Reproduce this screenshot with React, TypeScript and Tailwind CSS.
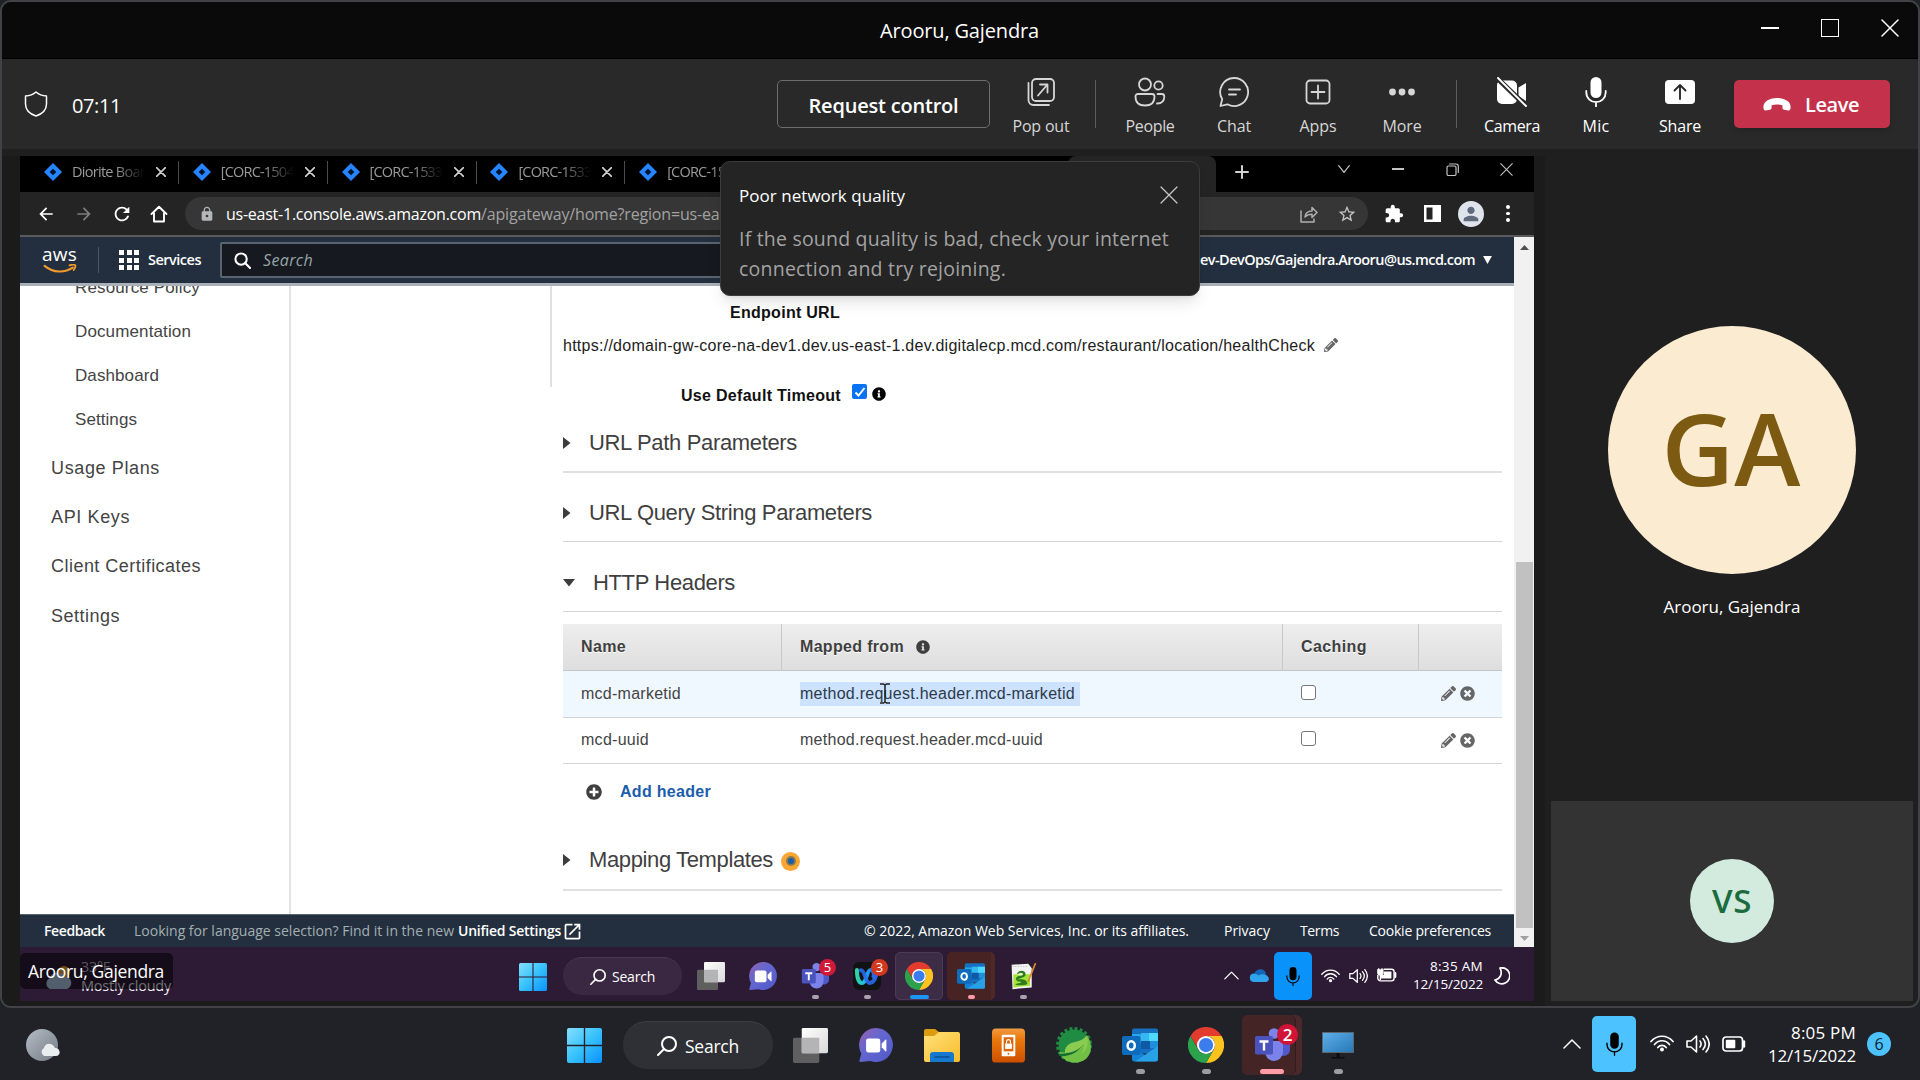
import React, { useLayoutEffect, useRef, useState } from "react";
import { FaPencilAlt, FaInfoCircle, FaTimesCircle, FaPlusCircle } from "react-icons/fa";
import { MdLock, MdStarBorder, MdExtension, MdPerson, MdOpenInNew, MdArrowBack, MdArrowForward, MdRefresh } from "react-icons/md";

/* Single line of text whose letter spacing is tuned so it fills its box. */
function T({ c, children }: { c: string; children: string }) {
  const box = useRef<HTMLSpanElement>(null);
  const inner = useRef<HTMLSpanElement>(null);
  const [ls, setLs] = useState(0);
  useLayoutEffect(() => {
    if (!box.current || !inner.current) return;
    const free = box.current.clientWidth - inner.current.getBoundingClientRect().width;
    setLs(free / children.length);
  }, [children]);
  return (
    <span ref={box} className={"block shrink-0 whitespace-nowrap " + c}>
      <span ref={inner} style={{ letterSpacing: ls + "px" }}>{children}</span>
    </span>
  );
}

const stroke = { fill: "none", stroke: "currentColor", strokeLinecap: "round", strokeLinejoin: "round" } as const;

/* ---------- icons ---------- */
const WinLogo = ({ c }: { c: string }) => (
  <svg viewBox="0 0 36 36" className={c}>
    <defs>
      <linearGradient id="win" x1="0" y1="0" x2="1" y2="1">
        <stop offset="0" stopColor="#86dfff" /><stop offset="0.5" stopColor="#37c2fb" /><stop offset="1" stopColor="#0a90ff" />
      </linearGradient>
    </defs>
    <path fill="url(#win)" d="M2 0h15.3v17.3H0V2a2 2 0 0 1 2-2zM18.7 0H34a2 2 0 0 1 2 2v15.3H18.7zM0 18.7h17.3V36H2a2 2 0 0 1-2-2zM18.7 18.7H36V34a2 2 0 0 1-2 2H18.7z" />
  </svg>
);
const Magnifier = ({ c }: { c: string }) => (
  <svg viewBox="0 0 20 20" className={c} {...stroke} strokeWidth="2">
    <circle cx="12" cy="8" r="7" /><path d="M7 13L1 19" />
  </svg>
);
const TaskView = ({ c }: { c: string }) => (
  <svg viewBox="0 0 36 36" className={c}>
    <defs><linearGradient id="tv" x1="0" y1="0" x2="1" y2="1"><stop offset="0" stopColor="#fff" /><stop offset="1" stopColor="#d9d9d9" /></linearGradient></defs>
    <rect x="0" y="10" width="27" height="26" rx="1.5" fill="#5f5f60" />
    <rect x="9" y="0" width="27" height="26" rx="1.5" fill="url(#tv)" />
    <rect x="9" y="10" width="18" height="16" fill="#b4b4b6" />
  </svg>
);
const ChatApp = ({ c }: { c: string }) => (
  <svg viewBox="0 0 36 36" className={c}>
    <defs><linearGradient id="ca" x1="0" y1="0" x2="1" y2="1"><stop offset="0" stopColor="#9a5fae" /><stop offset="0.4" stopColor="#6467cf" /><stop offset="1" stopColor="#5059c9" /></linearGradient></defs>
    <path fill="url(#ca)" d="M18 0a18 18 0 1 1-6 35L1.500 36c-1 0-1.200-.8-1-1.500L2.500 27A18 18 0 0 1 18 0z" />
    <rect x="7.500" y="11" width="15" height="15" rx="2.500" fill="#fff" />
    <path fill="#fff" d="M24 16.500l4-4c.6-.5 1-.3 1 .5v11c0 .8-.4 1-1 .5l-4-4z" />
  </svg>
);
const Explorer = ({ c }: { c: string }) => (
  <svg viewBox="0 0 36 36" className={c}>
    <defs><linearGradient id="ex" x1="0" y1="0" x2="1" y2="1"><stop offset="0" stopColor="#ffe07a" /><stop offset="1" stopColor="#f8bd2a" /></linearGradient></defs>
    <path fill="#dc9c10" d="M0 4a2 2 0 0 1 2-2h9l4 3v5H0z" />
    <path fill="url(#ex)" d="M0 9h10l5-4h19a2 2 0 0 1 2 2v26a2 2 0 0 1-2 2H2a2 2 0 0 1-2-2z" />
    <path fill="#1778cf" d="M6 35v-7a3 3 0 0 1 3-3h18a3 3 0 0 1 3 3v7z" />
    <path stroke="#0b4f93" strokeWidth="1.500" strokeLinecap="round" d="M11 30h14" />
  </svg>
);
const PhoneLock = ({ c }: { c: string }) => (
  <svg viewBox="0 0 36 36" className={c}>
    <defs><linearGradient id="pl" x1="0" y1="0" x2="0" y2="1"><stop offset="0" stopColor="#f29a42" /><stop offset="0.3" stopColor="#ea7a0c" /><stop offset="1" stopColor="#cd4f00" /></linearGradient></defs>
    <rect x="1" y="0.500" width="34" height="35" rx="4" fill="url(#pl)" />
    <rect x="11" y="7" width="14" height="22" rx="1" fill="#fff" />
    <rect x="13" y="9.500" width="10" height="14.500" fill="#df6508" />
    <rect x="14.500" y="16" width="7" height="5.500" fill="#fff" />
    <path d="M16 16v-2a2 2 0 0 1 4 0v2" fill="none" stroke="#fff" strokeWidth="1.200" />
    <circle cx="18" cy="26.500" r="1" fill="#df6508" />
  </svg>
);
const Spring = ({ c }: { c: string }) => (
  <svg viewBox="0 0 36 36" className={c}>
    <circle cx="18" cy="18" r="16" fill="none" stroke="#1f8b43" strokeWidth="4" strokeDasharray="2.900 2.130" />
    <circle cx="18" cy="18" r="15.500" fill="#1f8b43" />
    <path fill="#71bf44" d="M34 14c2 7 1 13-4 18-7 5-17 5-23-1-2-2-3-4-4-6 8 1 15 0 20-3 5-4 9-9 8-14z" />
    <path fill="#156b32" d="M3 27c8 0 18-3 24-11-3 9-14 14-24 13z" />
    <path fill="#8acb52" d="M31 8c2 9 0 16-6 19 2-3 3-7 3-10-5 6-12 9-19 9-1-6 4-10 10-11 5-1 9-3 12-7z" />
  </svg>
);
const Outlook = ({ c }: { c: string }) => (
  <svg viewBox="0 0 36 36" className={c}>
    <rect x="10" y="1.500" width="26" height="25" rx="2" fill="#1670c2" />
    <path fill="#28a8ea" d="M10 7h9v9h-9z" /><path fill="#50d9ff" d="M27 6h9v8h-9z" /><path fill="#35b8f1" d="M19 6h8v8h-8z" />
    <path fill="#0f5aa5" d="M19 14h9v8h-9z" /><path fill="#1f8fdc" d="M28 14h8v7h-8z" />
    <path fill="#1483d6" d="M10 20l13 8 13-9v13a2.500 2.500 0 0 1-2.500 2.500h-21A2.500 2.500 0 0 1 10 32z" />
    <path fill="#35b5f1" d="M36 19L13 34.500h20.500A2.500 2.500 0 0 0 36 32z" opacity="0.600" />
    <rect x="0" y="9" width="18.500" height="19" rx="2" fill="#0f6cbd" />
    <ellipse cx="9.200" cy="18.500" rx="3.600" ry="4.200" fill="none" stroke="#fff" strokeWidth="2.500" />
  </svg>
);
const Chrome = ({ c }: { c: string }) => (
  <svg viewBox="0 0 48 48" className={c}>
    <path fill="#e33b2e" d="M3.200 12A24 24 0 0 1 44.800 12L24 13 14 30z" />
    <path fill="#fcc31e" d="M44.800 12A24 24 0 0 1 24 48L34.400 30A12 12 0 0 0 24 12z" />
    <path fill="#2ba24c" d="M24 48A24 24 0 0 1 3.200 12L13.600 30A12 12 0 0 0 34.400 30z" />
    <circle cx="24" cy="24" r="12" fill="#fff" /><circle cx="24" cy="24" r="9.500" fill="#3b7ded" />
  </svg>
);
const Teams = ({ c }: { c: string }) => (
  <svg viewBox="0 0 36 36" className={c}>
    <circle cx="30" cy="8" r="3.800" fill="#5059c9" />
    <path fill="#5059c9" d="M24 14h10.500a1.500 1.500 0 0 1 1.500 1.500V23a6 6 0 0 1-8 5.500z" />
    <circle cx="20" cy="6.500" r="5.300" fill="#7b83eb" />
    <path fill="#7b83eb" d="M11 14h16.500a1.500 1.500 0 0 1 1.500 1.500V25a9 9 0 0 1-18 0z" />
    <rect x="1" y="9" width="18" height="18.500" rx="1.800" fill="#4b53bc" />
    <path stroke="#fff" strokeWidth="2.400" d="M5.500 14.500h9M10 14.500v9" />
  </svg>
);
const Webex = ({ c }: { c: string }) => (
  <svg viewBox="0 0 32 32" className={c}>
    <defs><linearGradient id="wx" x1="0" y1="0" x2="1" y2="0"><stop offset="0" stopColor="#2fd3a5" /><stop offset="0.500" stopColor="#1cb7f5" /><stop offset="1" stopColor="#2b5fe8" /></linearGradient></defs>
    <rect x="0" y="0" width="32" height="32" rx="7" fill="#101214" />
    <path d="M4.500 9c0 8 2 15 6 15 5 0 5.500-15 9.500-15s4 5 3.500 8" fill="none" stroke="url(#wx)" strokeWidth="4.500" strokeLinecap="round" />
    <path d="M9 9.500c5 0 5 14.500 10 14.500s8-7 8-14" fill="none" stroke="#2b6cf0" strokeWidth="4.500" strokeLinecap="round" opacity="0.900" />
  </svg>
);
const NotepadPP = ({ c }: { c: string }) => (
  <svg viewBox="0 0 32 32" className={c}>
    <path fill="#f2f2f2" d="M3 3l19-1 4 5v22L4 31z" />
    <path fill="#a6e33a" d="M5 14h19v13l-19 2z" />
    <path fill="#2d7d1f" d="M9 13c4-5 10-3 10 1s-6 4-10 6c6-1 12 0 12 5-4 2-10 2-14 1 2-2 7-2 7-3s-6 0-6-4c0-3 4-3 6-4z" />
    <path fill="#e8f5c8" d="M10 14c2-2 6-2 6 0s-5 2-6 0z" />
    <path stroke="#d98a2b" strokeWidth="2" d="M30 2l-8 20" strokeLinecap="round" />
    <path stroke="#bbb" strokeWidth="1" strokeDasharray="1.500 1.500" d="M4 5h18" />
  </svg>
);
const Monitor = ({ c }: { c: string }) => (
  <svg viewBox="0 0 36 36" className={c}>
    <defs><linearGradient id="mo" x1="0" y1="0" x2="1" y2="1"><stop offset="0" stopColor="#5fb0ec" /><stop offset="1" stopColor="#2577b5" /></linearGradient></defs>
    <rect x="2.500" y="5.500" width="31" height="20" fill="url(#mo)" stroke="#5d666e" />
    <path fill="#0c0d0f" d="M16.500 26h3v4h5v1.500h-13V30h5z" />
  </svg>
);
const MicFill = ({ c }: { c: string }) => (
  <svg viewBox="0 0 22 30" className={c}>
    <rect x="5.500" y="0" width="11" height="21" rx="5.500" fill="currentColor" />
    <path d="M1.300 14v1.500a9.700 9.700 0 0 0 19.400 0V14M11 25v4.500" {...stroke} strokeWidth="1.800" />
  </svg>
);
const Wifi = ({ c }: { c: string }) => (
  <svg viewBox="0 0 24 18" className={c} {...stroke} strokeWidth="1.700">
    <path d="M1 7.500C7 .5 17 .5 23 7.500M4.500 10.500c4-5 11-5 15 0M7.800 13.500c2.300-2.800 6.100-2.800 8.400 0" />
    <circle cx="12" cy="15.500" r="2" fill="currentColor" stroke="none" />
  </svg>
);
const Sound = ({ c }: { c: string }) => (
  <svg viewBox="0 0 24 20" className={c} {...stroke} strokeWidth="1.600">
    <path d="M1 7v6h4l5.500 5V2L5 7zM14 7c1.500 2 1.500 4 0 6M17 4.500c3 3.500 3 7.500 0 11M20 2c4 5 4 11 0 16" />
  </svg>
);
const Battery = ({ c, plug }: { c: string; plug?: boolean }) => (
  <svg viewBox="0 0 24 16" className={c}>
    <rect x="1" y="1" width="19.500" height="14" rx="3" {...stroke} strokeWidth="1.700" />
    <rect x="3.800" y="3.800" width={plug ? 13.5 : 9.5} height="8.400" rx="1" fill="currentColor" />
    <path d="M22 5.500v5" {...stroke} strokeWidth="2.400" />
    {plug && <><rect x="-1" y="-1" width="9" height="9" fill="#2d1b36" /><path d="M1 2h6v3a3 3 0 0 1-6 0zM2 0v2M6 0v2M4 7v7" stroke="currentColor" strokeWidth="1.600" fill="currentColor" /></>}
  </svg>
);
const ChevronUp = ({ c }: { c: string }) => (
  <svg viewBox="0 0 18 10" className={c} {...stroke} strokeWidth="1.500"><path d="M1 9l8-8 8 8" /></svg>
);
const Cross = ({ c }: { c: string }) => (
  <svg viewBox="0 0 18 18" className={c} {...stroke} strokeWidth="1.500"><path d="M1 1l16 16M17 1L1 17" /></svg>
);
const Jira = () => (
  <svg viewBox="0 0 18 18" className="h-[18px] w-[18px] shrink-0"><path fill="#2684ff" d="M9 0l9 9-9 9-9-9z" /><path fill="#04122b" d="M9 5.700L12.300 9 9 12.300 5.700 9z" /></svg>
);
const RightArrow = () => <svg viewBox="0 0 8 12" className="h-[12px] w-[8px] shrink-0"><path fill="#3c3c3c" d="M0 0l7.500 6L0 12z" /></svg>;

/* ---------- meeting window ---------- */
function TitleBar() {
  return (
    <div className="flex h-[57px] shrink-0 items-center border-b border-black bg-[#0a0a0a] text-white">
      <T c="ml-[878px] mt-[2px] w-[159px] text-[20px] leading-[28px]">Arooru, Gajendra</T>
      <div className="flex flex-1 items-center justify-end gap-[42px] pr-[19px] pb-[4px]">
        <div className="h-[1.5px] w-[18px] bg-white" />
        <div className="h-[18px] w-[18px] border-[1.5px] border-white" />
        <Cross c="h-[18px] w-[18px]" />
      </div>
    </div>
  );
}

function Tool({ w, label, white, children }: { w: string; label: string; white?: boolean; children: React.ReactNode }) {
  return (
    <div className={"flex w-[84px] shrink-0 flex-col items-center pt-[18px] " + (white ? "text-white" : "text-[#d6d6d6]")}>
      <div className="flex h-[30px] items-center justify-center">{children}</div>
      <T c={"mt-[7px] text-[16px] leading-[24px] " + w}>{label}</T>
    </div>
  );
}

function Toolbar() {
  return (
    <div className="flex h-[90px] shrink-0 items-start bg-[#292929] text-white">
      <svg viewBox="0 0 24 26" className="mt-[32px] ml-[22px] h-[26px] w-[24px] shrink-0" {...stroke} strokeWidth="1.500">
        <path d="M12 1c3 2.600 6.500 3.700 10.500 4v8c0 6-4 9.800-10.500 12C5.500 22.800 1.500 19 1.500 13V5C5.500 4.700 9 3.600 12 1z" />
      </svg>
      <T c="ml-[24px] mt-[33px] w-[49px] text-[20px] leading-[28px]">07:11</T>
      <div className="mt-[21px] ml-[656px] flex h-[48px] w-[213px] shrink-0 items-center justify-center rounded-[5px] border border-[#6e6e6e]">
        <T c="mt-[3px] w-[150px] text-[20px] font-semibold leading-[28px]">Request control</T>
      </div>
      <div className="w-[9px] shrink-0" />
      <Tool w="w-[57px]" label="Pop out">
        <svg viewBox="0 0 28 28" className="h-[28px] w-[28px]" {...stroke} strokeWidth="1.800">
          <rect x="5" y="1" width="22" height="22" rx="4" /><path d="M1.500 5v17a5 5 0 0 0 5 5H22M11 17.500l9.500-11M13 6.500h7.500v8" />
        </svg>
      </Tool>
      <div className="mt-[21px] ml-[12px] h-[48px] w-px shrink-0 bg-[#5c5c5c]" />
      <div className="w-[12px] shrink-0" />
      <Tool w="w-[49px]" label="People">
        <svg viewBox="0 0 32 30" className="h-[30px] w-[32px]" {...stroke} strokeWidth="1.800">
          <circle cx="11" cy="7.500" r="6" /><circle cx="24.500" cy="8.500" r="4.200" />
          <path d="M4 17h14a2.500 2.500 0 0 1 2.500 2.500c0 6-3 9-9.500 9s-9.500-3-9.500-9A2.500 2.500 0 0 1 4 17zM23.500 17h4.300a2.500 2.500 0 0 1 2.500 2.500c0 4.500-2.500 7-7.300 7" />
        </svg>
      </Tool>
      <Tool w="w-[34px]" label="Chat">
        <svg viewBox="0 0 30 30" className="h-[30px] w-[30px]" {...stroke} strokeWidth="1.800">
          <path d="M15 1a14 14 0 1 1-6.600 26.300L1.500 29l1.700-6.800A14 14 0 0 1 15 1zM10 12.500h11M10 17.500h7" />
        </svg>
      </Tool>
      <Tool w="w-[37px]" label="Apps">
        <svg viewBox="0 0 26 26" className="h-[26px] w-[26px]" {...stroke} strokeWidth="1.800">
          <rect x="1.500" y="1.500" width="23" height="23" rx="3.500" /><path d="M13 6.500v13M6.500 13h13" />
        </svg>
      </Tool>
      <Tool w="w-[39px]" label="More">
        <svg viewBox="0 0 26 8" className="h-[8px] w-[26px]" fill="currentColor"><circle cx="3.500" cy="4" r="3.400" /><circle cx="13" cy="4" r="3.400" /><circle cx="22.500" cy="4" r="3.400" /></svg>
      </Tool>
      <div className="mt-[21px] ml-[12px] h-[48px] w-px shrink-0 bg-[#5c5c5c]" />
      <div className="w-[13px] shrink-0" />
      <Tool w="w-[56px]" label="Camera" white>
        <svg viewBox="0 0 30 30" className="h-[30px] w-[30px]">
          <path fill="#fff" d="M4 3.500h11a5 5 0 0 1 5 5V22a5 5 0 0 1-5 5H5a5 5 0 0 1-5-5V8a5 5 0 0 1 4-4.500zM21.500 10.500L29 6v18l-7.500-5z" />
          <path stroke="#292929" strokeWidth="5" d="M0 1l30 29" /><path stroke="#fff" strokeWidth="1.900" strokeLinecap="round" d="M1 1l28 28" />
        </svg>
      </Tool>
      <Tool w="w-[27px]" label="Mic" white><MicFill c="h-[30px] w-[22px]" /></Tool>
      <Tool w="w-[42px]" label="Share" white>
        <svg viewBox="0 0 30 24" className="h-[24px] w-[30px]">
          <rect width="30" height="24" rx="4" fill="#fff" /><path d="M15 19V5.500M9.500 10.500l5.500-5.500 5.500 5.500" fill="none" stroke="#292929" strokeWidth="1.900" strokeLinecap="round" strokeLinejoin="round" />
        </svg>
      </Tool>
      <div className="mt-[21px] ml-[12px] flex h-[48px] w-[156px] shrink-0 items-center rounded-[5px] bg-[#c4314b] pl-[28px] shadow-md">
        <svg viewBox="0 0 30 16" className="h-[15px] w-[30px] shrink-0"><path fill="#fff" d="M15 1c7 0 14.500 3 14.500 9.500 0 3-.8 4-2.500 3.800l-4.300-.7c-1.200-.2-1.900-1-1.900-2.200V8.800C17 7.600 13 7.600 9.200 8.800v2.600c0 1.200-.7 2-1.900 2.200L3 14.300C1.300 14.500.5 13.500.5 10.500.5 4 8 1 15 1z" /></svg>
        <T c="ml-[13px] mt-[2px] w-[54px] text-[20px] font-semibold leading-[28px]">Leave</T>
      </div>
    </div>
  );
}

/* ---------- shared browser ---------- */
function Tab({ label }: { label: string }) {
  return (
    <div className="flex h-[36px] w-[148.800px] shrink-0 items-center pb-[4px] pl-[15px]">
      <Jira />
      <T c="ml-[10px] w-[73px] text-[14.500px] leading-[22px] text-[#9a9a9a] [mask-image:linear-gradient(to_right,black_60%,transparent)]">{label}</T>
      <Cross c="ml-[11px] h-[10px] w-[10px] shrink-0 text-[#cfcfcf] [stroke-width:3]" />
      <div className="ml-[12px] h-[23px] w-px shrink-0 bg-[#4c4c4c]" />
    </div>
  );
}

function BrowserChrome() {
  return (
    <>
      <div className="flex h-[36px] shrink-0 bg-black">
        <div className="w-[9px] shrink-0" />
        <Tab label="Diorite Boar" />
        <Tab label="[CORC-1504" />
        <Tab label="[CORC-1533" />
        <Tab label="[CORC-1533" />
        <Tab label="[CORC-1533" />
        <div className="ml-[295px] h-[36px] w-[148px] shrink-0 rounded-t-[8px] bg-[#242424]" />
        <svg viewBox="0 0 14 14" className="mt-[9px] ml-[19px] h-[14px] w-[14px] shrink-0 text-[#d0d0d0]" {...stroke} strokeWidth="2"><path d="M7 1v12M1 7h12" /></svg>
        <div className="mt-[7px] ml-[89px] flex h-[12px] items-center text-[#c4c4c4]">
          <svg viewBox="0 0 12 8" className="h-[8px] w-[12px]" {...stroke} strokeWidth="1.200"><path d="M.7.700L6 7.300 11.300.7" /></svg>
          <div className="ml-[42px] h-[1.500px] w-[12px] bg-[#c4c4c4]" />
          <svg viewBox="0 0 13 13" className="ml-[42px] h-[13px] w-[13px]" {...stroke} strokeWidth="1.200"><rect x="1" y="3" width="9" height="9.500" rx="1.500" /><path d="M3.500 1H10a2.300 2.300 0 0 1 2.300 2.300V9.500" /></svg>
          <Cross c="ml-[41px] h-[13px] w-[13px]" />
        </div>
      </div>
      <div className="flex h-[45px] shrink-0 items-center border-b-2 border-[#5a5a5a] bg-[#242424] pl-[16px] text-white">
        <MdArrowBack className="h-[20px] w-[20px] shrink-0" />
        <MdArrowForward className="ml-[18px] h-[20px] w-[20px] shrink-0 text-[#7d7d7d]" />
        <MdRefresh className="ml-[17px] h-[22px] w-[22px] shrink-0" />
        <svg viewBox="0 0 18 18" className="ml-[17px] h-[18px] w-[18px] shrink-0" {...stroke} strokeWidth="1.900"><path d="M1.500 9L9 1.700 16.500 9M4 8v8.500h10V8" /></svg>
        <div className="ml-[17px] flex h-[33px] w-[1183px] shrink-0 items-center rounded-full bg-[#363636] pl-[14px]">
          <MdLock className="h-[16px] w-[16px] shrink-0 text-[#b4b7ba]" />
          <T c="ml-[11px] w-[255px] text-[16px] leading-[24px]">us-east-1.console.aws.amazon.com</T>
          <T c="w-[246px] text-[16px] leading-[24px] text-[#a2a2a2]">/apigateway/home?region=us-eas</T>
          <svg viewBox="0 0 18 18" className="ml-[573px] h-[18px] w-[18px] shrink-0 text-[#b0b0b0]" {...stroke} strokeWidth="1.500"><path d="M1 6v11h13v-3M5 12c.5-4 3-6 7-6V2.500L17 7.500l-5 5V9.300C9 9.300 7 10 5 12z" /></svg>
          <MdStarBorder className="ml-[19px] h-[20px] w-[20px] shrink-0 text-[#c4c4c4]" />
        </div>
        <MdExtension className="ml-[16px] h-[20px] w-[20px]" />
        <svg viewBox="0 0 17 17" className="ml-[20px] h-[17px] w-[17px]"><path fill="#fff" d="M0 0h17v17H0zM2.500 2.500v12h6v-12z" fillRule="evenodd" /></svg>
        <div className="ml-[17px] flex h-[26px] w-[26px] items-center justify-center rounded-full bg-[#dfe3ec]"><MdPerson className="h-[22px] w-[22px] text-[#5f6a7d]" /></div>
        <div className="ml-[22px] flex flex-col gap-[3px]"><div className="h-[3.500px] w-[3.500px] rounded-full bg-white" /><div className="h-[3.500px] w-[3.500px] rounded-full bg-white" /><div className="h-[3.500px] w-[3.500px] rounded-full bg-white" /></div>
      </div>
    </>
  );
}

function AwsHeader() {
  return (
    <div className="flex h-[49px] shrink-0 items-center border-b-[3px] border-[#a9b0b7] bg-[#232f3e] text-white">
      <div className="ml-[22px] w-[36px] shrink-0">
        <T c="w-[35px] text-[19px] font-medium leading-[15px]">aws</T>
        <svg viewBox="0 0 36 11" className="mt-[2px] h-[10px] w-[36px]"><path d="M1 2c10 8 22 8 31 2" fill="none" stroke="#f29a2e" strokeWidth="2.400" strokeLinecap="round" /><path d="M28.500 1.500c3-1 5-1 6-.3s.3 3-1.500 5.500" fill="none" stroke="#f29a2e" strokeWidth="2" strokeLinecap="round" /></svg>
      </div>
      <div className="ml-[20px] h-[26px] w-px shrink-0 bg-[#4b5664]" />
      <div className="ml-[20px] grid shrink-0 grid-cols-3 gap-[2.500px]">
        {Array.from({ length: 9 }, (_, i) => <div key={i} className="h-[5px] w-[5px] bg-white" />)}
      </div>
      <T c="ml-[9px] w-[53px] text-[14.500px] font-semibold leading-[22px]">Services</T>
      <div className="ml-[19px] flex h-[36px] w-[700px] shrink-0 items-center rounded-[2px] border-2 border-[#56656f] bg-[#16191f] pl-[12px]">
        <svg viewBox="0 0 18 18" className="h-[17px] w-[17px]" {...stroke} strokeWidth="2.200"><circle cx="7.500" cy="7.500" r="6" /><path d="M12 12l5 5" /></svg>
        <T c="ml-[12px] w-[50px] text-[16px] italic leading-[24px] text-[#95a5a6]">Search</T>
      </div>
      <T c="ml-[280px] w-[275px] text-[14.500px] font-semibold leading-[22px]">ev-DevOps/Gajendra.Arooru@us.mcd.com</T>
      <svg viewBox="0 0 10 9" className="ml-[8px] h-[8px] w-[9px] shrink-0"><path fill="#fff" d="M0 0h10L5 9z" /></svg>
    </div>
  );
}

function SideNav() {
  return (
    <div className="h-full w-[271px] shrink-0 overflow-hidden border-r-2 border-[#e2e2e2] pl-[31px] text-[#444]">
      <div className="-mt-[10px] flex flex-col pl-[24px] text-[17px] leading-[24px]">
        <T c="w-[125px]">Resource Policy</T>
        <T c="mt-[20px] w-[116px]">Documentation</T>
        <T c="mt-[20px] w-[84px]">Dashboard</T>
        <T c="mt-[20px] w-[62px]">Settings</T>
      </div>
      <div className="mt-[23px] flex flex-col text-[18px] leading-[26px]">
        <T c="w-[109px]">Usage Plans</T>
        <T c="mt-[23px] w-[79px]">API Keys</T>
        <T c="mt-[23px] w-[150px]">Client Certificates</T>
        <T c="mt-[24px] w-[69px]">Settings</T>
      </div>
    </div>
  );
}

function HeaderRow({ name, nw, from, fw, selected }: { name: string; nw: string; from: string; fw: string; selected?: boolean }) {
  return (
    <div className={"flex h-[46.500px] items-center border-b border-[#d5d5d5] text-[16px] leading-[24px] text-[#444] " + (selected ? "bg-[#f0f8ff]" : "bg-white")}>
      <div className="w-[219px] shrink-0 pl-[18px]"><T c={nw}>{name}</T></div>
      <div className="w-[501px] shrink-0 pl-[18px]">
        <div className={"relative flex h-[24px] w-[280px] " + (selected ? "bg-[#cce2ff] text-[#2c3a4a]" : "")}>
          <T c={fw}>{from}</T>
          {selected && (
            <svg viewBox="0 0 12 21" className="absolute top-[1px] left-[79px] h-[21px] w-[12px]"><path d="M1 1h3.500L6 2l1.500-1H11M6 2v17M1 20h3.500L6 19l1.500 1H11" fill="none" stroke="#222" strokeWidth="1.500" /></svg>
          )}
        </div>
      </div>
      <div className="w-[158px] shrink-0 pl-[18px]"><div className="mb-[3px] h-[15px] w-[15px] rounded-[3px] border-[1.500px] border-[#767676] bg-white" /></div>
      <div className="flex gap-[4px] text-[#666]">
        <FaPencilAlt className="h-[15px] w-[15px]" />
        <FaTimesCircle className="h-[15px] w-[15px]" />
      </div>
    </div>
  );
}

function Integration() {
  return (
    <div className="flex h-full flex-1">
      <div className="ml-[259px] h-[101px] w-[2px] shrink-0 bg-[#e0e0e0]" />
      <div className="ml-[11px] w-[939px] shrink-0 text-[#3f3f3f]">
        <T c="mt-[15px] ml-[167px] w-[110px] text-[16px] font-bold leading-[24px] text-[#111]">Endpoint URL</T>
        <div className="mt-[9px] flex h-[24px] items-center">
          <T c="w-[752px] text-[16px] leading-[24px] text-[#222]">https://domain-gw-core-na-dev1.dev.us-east-1.dev.digitalecp.mcd.com/restaurant/location/healthCheck</T>
          <FaPencilAlt className="mb-[2px] ml-[9px] h-[14px] w-[14px] text-[#666]" />
        </div>
        <div className="mt-[26px] flex h-[24px] items-center">
          <T c="ml-[118px] w-[160px] text-[16px] font-bold leading-[24px] text-[#111]">Use Default Timeout</T>
          <div className="mb-[9px] ml-[11px] flex h-[15px] w-[15px] items-center justify-center rounded-[2px] bg-[#0a72f5]">
            <svg viewBox="0 0 12 12" className="h-[12px] w-[12px]"><path d="M1.500 6.500l3 3L10.500 2" fill="none" stroke="#fff" strokeWidth="2" /></svg>
          </div>
          <FaInfoCircle className="mb-[5px] ml-[5px] h-[14px] w-[14px] text-black" />
        </div>
        <div className="flex h-[65px] items-center border-b-2 border-[#e0e0e0] pt-[7px]">
          <RightArrow /><T c="ml-[18px] w-[208px] text-[22px] leading-[30px]">URL Path Parameters</T>
        </div>
        <div className="flex h-[69px] items-center border-b border-[#d5d5d5] pt-[12px]">
          <RightArrow /><T c="ml-[18px] w-[283px] text-[22px] leading-[30px]">URL Query String Parameters</T>
        </div>
        <div className="flex h-[70px] items-center border-b border-[#d5d5d5] pt-[12px]">
          <svg viewBox="0 0 12 8" className="h-[8px] w-[12px] shrink-0"><path fill="#3c3c3c" d="M0 0h12L6 7.500z" /></svg>
          <T c="ml-[18px] w-[142px] text-[22px] leading-[30px]">HTTP Headers</T>
        </div>
        <div className="mt-[12px] flex h-[47px] border-b border-[#c6c6c6] bg-gradient-to-b from-[#eeeeee] to-[#dedede] text-[16px] font-bold leading-[24px] [text-shadow:0_1px_0_white]">
          <div className="flex w-[219px] items-center border-r border-[#c8c8c8] pl-[18px]"><T c="w-[45px]">Name</T></div>
          <div className="flex w-[501px] items-center border-r border-[#c8c8c8] pl-[18px]"><T c="w-[104px]">Mapped from</T><FaInfoCircle className="ml-[12px] h-[14px] w-[14px]" /></div>
          <div className="flex w-[136px] items-center border-r border-[#c8c8c8] pl-[18px]"><T c="w-[66px]">Caching</T></div>
        </div>
        <HeaderRow name="mcd-marketid" nw="w-[100px]" from="method.request.header.mcd-marketid" fw="w-[275px]" selected />
        <HeaderRow name="mcd-uuid" nw="w-[68px]" from="method.request.header.mcd-uuid" fw="w-[243px]" />
        <div className="flex h-[54px] items-center pt-[1px]">
          <FaPlusCircle className="ml-[23px] h-[16px] w-[16px]" />
          <T c="ml-[18px] w-[91px] text-[16px] font-bold leading-[24px] text-[#1a5dab]">Add header</T>
        </div>
        <div className="flex h-[73px] items-center border-b-2 border-[#e0e0e0] pt-[13px]">
          <RightArrow /><T c="ml-[18px] w-[184px] text-[22px] leading-[30px]">Mapping Templates</T>
          <div className="mt-[2px] ml-[8px] flex h-[19px] w-[19px] items-center justify-center rounded-full bg-[#faa634]"><div className="h-[10px] w-[10px] rounded-full border-2 border-[#8c7a4e] bg-[#175ea8]" /></div>
        </div>
      </div>
    </div>
  );
}

function AwsFooter() {
  return (
    <div className="flex h-[33px] shrink-0 items-center border-t border-[#56656f] bg-[#232f3e] pl-[24px] text-[14px] leading-[22px] text-white">
      <T c="w-[61px] font-semibold">Feedback</T>
      <T c="ml-[29px] w-[320px] text-[#a3afb2]">Looking for language selection? Find it in the new</T>
      <T c="ml-[4px] w-[103px] font-semibold">Unified Settings</T>
      <MdOpenInNew className="ml-[1px] h-[21px] w-[21px] shrink-0" />
      <T c="ml-[281px] w-[325px] font-medium">© 2022, Amazon Web Services, Inc. or its affiliates.</T>
      <T c="ml-[35px] w-[46px] font-medium">Privacy</T>
      <T c="ml-[30px] w-[39px] font-medium">Terms</T>
      <T c="ml-[30px] w-[122px] font-medium">Cookie preferences</T>
    </div>
  );
}

function InnerApp({ box, dot, badge, bg, children }: { box?: string; dot?: string; badge?: string; bg?: string; children: React.ReactNode }) {
  return (
    <div className="relative flex h-[48px] w-[52px] shrink-0 items-center justify-center">
      {box && <div className={"absolute inset-x-[2px] inset-y-0 rounded-[5px] " + box} />}
      <div className="relative">{children}</div>
      {dot && <div className={"absolute bottom-[1px] h-[4px] rounded-full " + dot} />}
      {badge && <div className={"absolute top-[7px] left-[30px] flex h-[17px] w-[17px] items-center justify-center rounded-full text-[13px] leading-none text-white " + bg}>{badge}</div>}
    </div>
  );
}

function InnerTaskbar() {
  return (
    <div className="relative flex h-[54px] shrink-0 items-start bg-[#2d1b36] pt-[5px] text-white">
      <svg viewBox="0 0 28 26" className="mt-[13px] ml-[24px] h-[26px] w-[28px] shrink-0"><circle cx="20" cy="7" r="6" fill="#ffab2e" /><path fill="#b9d0f2" d="M6 24a6 6 0 0 1 0-11c1-6 11-8 14-1 8-1 10 9 3 12z" /></svg>
      <div className="mt-[5px] ml-[9px] w-[90px] shrink-0 text-[14.500px] leading-[19px] text-[#f4f0f6]"><T c="w-[29px] opacity-75">33°F</T><T c="w-[90px]">Mostly cloudy</T></div>
      <WinLogo c="mt-[11px] ml-[348px] h-[28px] w-[28px] shrink-0" />
      <div className="mt-[5px] ml-[16px] flex h-[38px] w-[119px] shrink-0 items-center rounded-full border-t border-[#4a3853] bg-[#3a2843] pl-[27px]">
        <Magnifier c="h-[16px] w-[16px]" /><T c="ml-[6px] w-[43px] text-[14px] leading-[20px]">Search</T>
      </div>
      <div className="w-[3px] shrink-0" />
      <InnerApp><TaskView c="h-[28px] w-[28px]" /></InnerApp>
      <InnerApp><ChatApp c="h-[28px] w-[28px]" /></InnerApp>
      <InnerApp dot="w-[7px] bg-[#a9a3ae]" badge="5" bg="bg-[#cf1a37]"><Teams c="h-[28px] w-[28px]" /></InnerApp>
      <InnerApp dot="w-[7px] bg-[#a9a3ae]" badge="3" bg="bg-[#d1391f]"><Webex c="h-[28px] w-[28px]" /></InnerApp>
      <InnerApp box="border border-[#4b3b54] bg-[#3d2c46]" dot="w-[19px] bg-[#1c96f5]"><Chrome c="h-[28px] w-[28px]" /></InnerApp>
      <InnerApp box="border-r-4 border-[#4d2a25] bg-[#472423]" dot="w-[7px] bg-[#ff9ba5]"><Outlook c="h-[28px] w-[28px]" /></InnerApp>
      <InnerApp dot="w-[7px] bg-[#a9a3ae]"><NotepadPP c="h-[28px] w-[28px]" /></InnerApp>
      <ChevronUp c="mt-[19px] ml-[175px] h-[9px] w-[15px] shrink-0" />
      <svg viewBox="0 0 20 14" className="mt-[17px] ml-[10px] h-[14px] w-[20px] shrink-0"><path fill="#1066b8" d="M5 6c1-7 11-8 12-1l-5 5z" /><path fill="#2fa3ec" d="M4.500 13a4.300 4.300 0 0 1 0-8.500c2 0 4 1 5 2 3-2 8-2 10 2 1 2 0 4.500-3 4.500z" /></svg>
      <div className="ml-[5px] flex h-[48px] w-[38px] shrink-0 items-center justify-center rounded-[5px] bg-[#0a92fb] text-black"><MicFill c="h-[19px] w-[14px]" /></div>
      <Wifi c="mt-[16px] ml-[9px] h-[15px] w-[19px] shrink-0" />
      <Sound c="mt-[16px] ml-[9px] h-[16px] w-[19px] shrink-0" />
      <Battery plug c="mt-[16px] ml-[9px] h-[14px] w-[20px] shrink-0" />
      <div className="mt-[5px] ml-[16px] flex w-[70px] shrink-0 flex-col items-end text-[13.500px] leading-[18px]"><T c="w-[53px]">8:35 AM</T><T c="w-[70px]">12/15/2022</T></div>
      <svg viewBox="0 0 16 18" className="mt-[15px] ml-[11px] h-[18px] w-[16px] shrink-0" {...stroke} strokeWidth="1.700"><path d="M6 1a8 8 0 1 1-5 12c5-1 8-6 5-12z" /></svg>
      <div className="absolute top-[6px] left-0 flex h-[36px] w-[153px] items-center rounded-[5px] bg-black/55 pl-[8px]"><T c="w-[136px] text-[17.500px] leading-[24px]">Arooru, Gajendra</T></div>
    </div>
  );
}

function SharedScreen() {
  return (
    <div className="flex h-[845px] w-[1514px] shrink-0 flex-col overflow-hidden bg-white">
      <BrowserChrome />
      <div className="flex h-[710px] shrink-0">
        <div className="flex w-[1494px] shrink-0 flex-col">
          <AwsHeader />
          <div className="flex h-[628px] shrink-0 overflow-hidden font-['Liberation_Sans',sans-serif]">
            <SideNav />
            <Integration />
          </div>
          <AwsFooter />
        </div>
        <div className="flex w-[20px] shrink-0 flex-col items-center bg-[#f1f1f1]">
          <svg viewBox="0 0 9 5" className="mt-[8px] h-[5px] w-[9px]"><path fill="#505050" d="M0 5h9L4.500 0z" /></svg>
          <div className="mt-[312px] h-[366px] w-[17px] bg-[#c1c1c1]" />
          <svg viewBox="0 0 9 5" className="mt-[8px] h-[5px] w-[9px]"><path fill="#a0a0a0" d="M0 0h9L4.500 5z" /></svg>
        </div>
      </div>
      <InnerTaskbar />
    </div>
  );
}

function Participants() {
  return (
    <div className="ml-[6px] flex w-[362px] flex-col items-center">
      <div className="mt-[170px] flex h-[248px] w-[248px] items-center justify-center rounded-full bg-[#faebd1] pr-[2px] pb-[6px]">
        <T c="w-[139px] text-[100px] font-semibold leading-[120px] text-[#7d5a11]">GA</T>
      </div>
      <T c="mt-[21px] w-[137px] text-[17px] leading-[24px] text-white">Arooru, Gajendra</T>
      <div className="mt-[182px] flex h-[200px] w-[362px] items-center justify-center bg-[#333333]">
        <div className="flex h-[84px] w-[84px] items-center justify-center rounded-full bg-[#d2ebde]"><T c="w-[40px] text-[33px] font-semibold leading-[44px] text-[#1b6b40]">VS</T></div>
      </div>
    </div>
  );
}

function NetworkToast() {
  return (
    <div className="absolute top-[161px] left-[720px] h-[135px] w-[480px] rounded-[10px] border border-[#3c3c3c] bg-[#242424] px-[18px] pt-[21px] shadow-lg">
      <div className="flex items-center justify-between">
        <T c="w-[166px] text-[17px] leading-[26px] text-white">Poor network quality</T>
        <Cross c="mr-[3px] mb-[2px] h-[18px] w-[18px] text-[#c8c8c8] [stroke-width:1.200]" />
      </div>
      <T c="mt-[15px] w-[430px] text-[19.500px] leading-[30px] text-[#a3a3a3]">If the sound quality is bad, check your internet</T>
      <T c="w-[267px] text-[19.500px] leading-[30px] text-[#a3a3a3]">connection and try rejoining.</T>
    </div>
  );
}

/* ---------- desktop taskbar ---------- */
function DesktopApp({ dot, children }: { dot?: string; children: React.ReactNode }) {
  return (
    <div className="relative flex h-[60px] w-[66px] shrink-0 items-center justify-center">
      {children}
      {dot && <div className={"absolute bottom-[1px] h-[5px] rounded-full " + dot} />}
    </div>
  );
}

function Taskbar() {
  return (
    <div className="flex h-[72px] shrink-0 items-start bg-[#202227] pt-[7px] text-white">
      <svg viewBox="0 0 34 34" className="mt-[13px] ml-[26px] h-[34px] w-[34px] shrink-0">
        <defs><linearGradient id="mn" x1="0" y1="0" x2="1" y2="1"><stop offset="0" stopColor="#b4bcc6" /><stop offset="1" stopColor="#747b84" /></linearGradient></defs>
        <circle cx="16" cy="17" r="16" fill="url(#mn)" /><path fill="#e9edf0" d="M18 28a4.500 4.500 0 0 1 0-8c1-5 8-6 11 0 6 0 6 8 1 8z" />
      </svg>
      <WinLogo c="mt-[13px] ml-[507px] h-[35px] w-[35px] shrink-0" />
      <div className="mt-[6px] ml-[21px] flex h-[48px] w-[150px] shrink-0 items-center rounded-full border-t border-[#3c3e43] bg-[#2e3035] pl-[34px]">
        <Magnifier c="h-[20px] w-[20px]" /><T c="ml-[8px] w-[54px] text-[17.500px] leading-[24px]">Search</T>
      </div>
      <div className="w-[4px] shrink-0" />
      <DesktopApp><TaskView c="h-[35px] w-[35px]" /></DesktopApp>
      <DesktopApp><ChatApp c="h-[34px] w-[34px]" /></DesktopApp>
      <DesktopApp><Explorer c="h-[36px] w-[36px]" /></DesktopApp>
      <DesktopApp><PhoneLock c="h-[35px] w-[35px]" /></DesktopApp>
      <DesktopApp><Spring c="h-[36px] w-[36px]" /></DesktopApp>
      <DesktopApp dot="w-[9px] bg-[#9c9da0]"><Outlook c="h-[36px] w-[36px]" /></DesktopApp>
      <DesktopApp dot="w-[9px] bg-[#9c9da0]"><Chrome c="h-[36px] w-[36px]" /></DesktopApp>
      <DesktopApp dot="w-[24px] bg-[#ff9ba5]">
        <div className="relative flex h-[60px] w-[60px] items-center justify-center rounded-[6px] bg-[#4b292b]">
          <div className="absolute inset-y-0 left-0 w-[54px] rounded-[6px] border-r border-[#2f1c1f] bg-[#452426]" />
          <Teams c="relative h-[36px] w-[36px]" />
          <div className="absolute top-[9px] right-[4px] flex h-[21px] w-[21px] items-center justify-center rounded-full bg-[#d11335] text-[17px] font-semibold leading-none">2</div>
        </div>
      </DesktopApp>
      <DesktopApp dot="w-[9px] bg-[#9c9da0]"><Monitor c="h-[36px] w-[36px]" /></DesktopApp>
      <ChevronUp c="mt-[24px] ml-[192px] h-[10px] w-[18px] shrink-0" />
      <div className="mt-[1px] ml-[11px] flex h-[56px] w-[44px] shrink-0 items-center justify-center rounded-[5px] bg-[#4cc2ff] text-black"><MicFill c="h-[24px] w-[17px]" /></div>
      <Wifi c="mt-[19px] ml-[14px] h-[18px] w-[24px] shrink-0" />
      <Sound c="mt-[19px] ml-[12px] h-[20px] w-[24px] shrink-0" />
      <Battery c="mt-[21px] ml-[12px] h-[16px] w-[24px] shrink-0" />
      <div className="mt-[6px] ml-[22px] flex w-[88px] shrink-0 flex-col items-end text-[17px] leading-[23px]"><T c="w-[65px]">8:05 PM</T><T c="w-[88px]">12/15/2022</T></div>
      <div className="mt-[17px] ml-[11px] flex h-[24px] w-[24px] shrink-0 items-center justify-center rounded-full bg-[#4cc2ff] text-[16px] leading-none text-[#10222e]">6</div>
    </div>
  );
}

export default function App() {
  return (
    <div className="relative flex h-[1080px] w-[1920px] flex-col overflow-hidden bg-[#202227] font-['Open_Sans','Noto_Sans',sans-serif]">
      <div className="flex h-[1008px] shrink-0 flex-col overflow-hidden rounded-[11px] border-2 border-[#414146] bg-[#1f1f1f]">
        <TitleBar />
        <Toolbar />
        <div className="flex flex-1 pt-[7px]">
          <div className="flex w-[1543px] shrink-0 items-start bg-[#1b1b1b] pl-[18px]"><SharedScreen /></div>
          <Participants />
        </div>
      </div>
      <Taskbar />
      <NetworkToast />
    </div>
  );
}
